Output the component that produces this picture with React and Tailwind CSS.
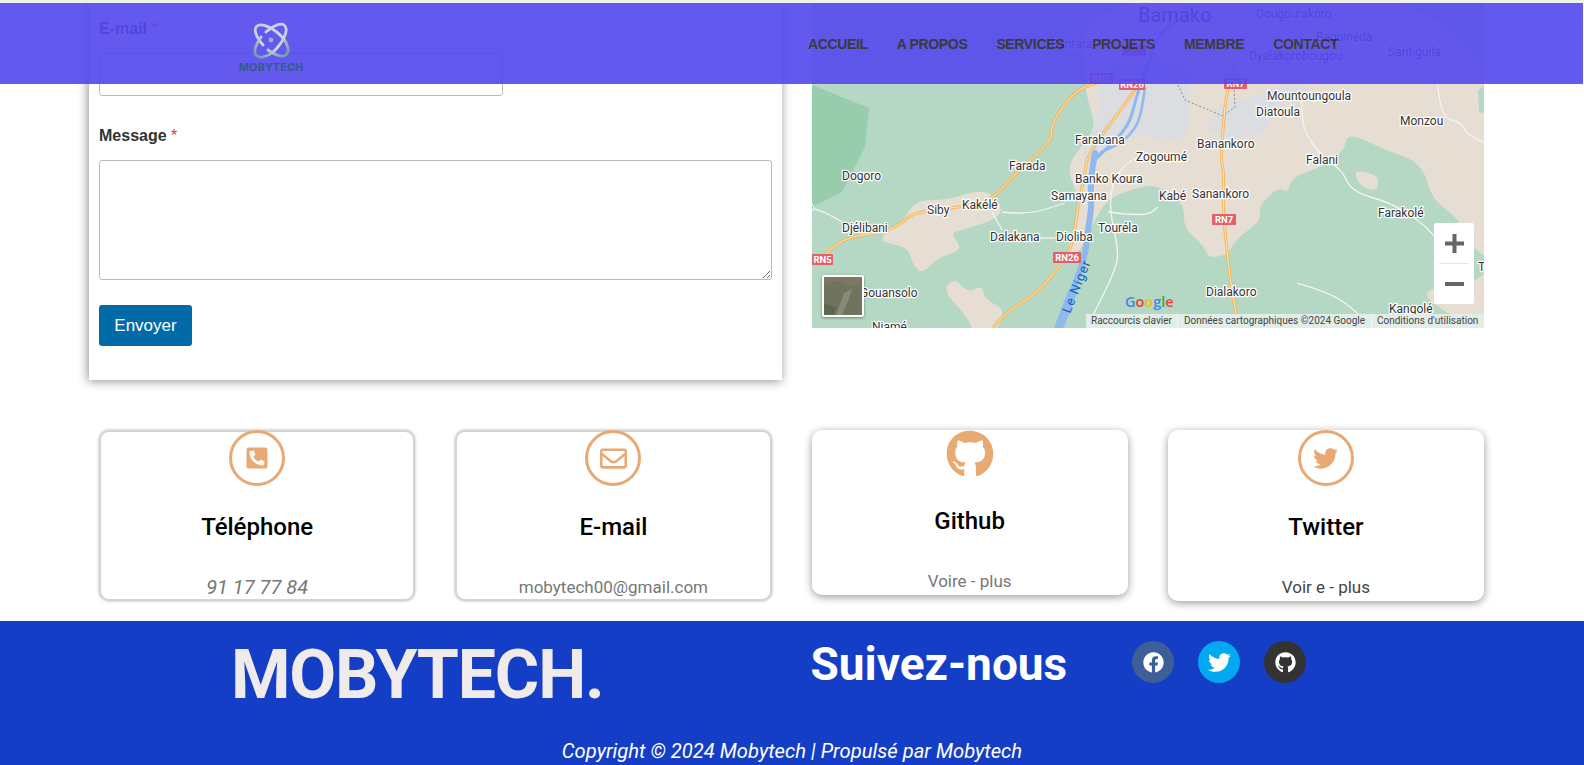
import React from "react";
import { FaGithub, FaFacebook, FaTwitter, FaRegEnvelope, FaPhoneSquareAlt } from "react-icons/fa";

const labels = [
  ["Dougourakoro", 1256, 14], ["Baguinéda", 1316, 37], ["Dyalakorobougou", 1249, 56], ["Santiguila", 1388, 52], ["Sanfara", 1051, 44],
  ["Dogoro", 842, 176], ["o", 806, 207], ["Siby", 927, 210], ["Kakélé", 962, 205], ["Farada", 1009, 166], ["Farabana", 1075, 140],
  ["Banko Koura", 1075, 179], ["Samayana", 1051, 196], ["Djélibani", 842, 228], ["Dalakana", 990, 237], ["Dioliba", 1056, 237],
  ["Touréla", 1098, 228], ["Gouansolo", 860, 293], ["Niamé", 872, 327], ["Zogoumé", 1136, 157], ["Mountoungoula", 1267, 96],
  ["Diatoula", 1256, 112], ["Monzou", 1400, 121], ["Banankoro", 1197, 144], ["Falani", 1306, 160], ["Kabé", 1159, 196],
  ["Sanankoro", 1192, 194], ["Farakolé", 1378, 213], ["Dialakoro", 1206, 292], ["Kangolé", 1389, 309], ["T", 1478, 267],
];
const shields = [
  ["RN5", 1090, 73, 23], ["RN26", 1119, 79, 26], ["RN7", 1224, 78, 23], ["", 1122, 45, 24], ["RN7", 1212, 214, 24], ["RN26", 1053, 252, 28], ["RN5", 812, 254, 21],
];

// Rounded outline through a list of points: each vertex becomes a quadratic corner.
const smooth = (pts, closed) => {
  const mid = (a, b) => [(a[0] + b[0]) / 2, (a[1] + b[1]) / 2];
  if (closed) {
    const start = mid(pts[pts.length - 1], pts[0]);
    let d = `M${start[0]} ${start[1]}`;
    pts.forEach((p, i) => {
      const m = mid(p, pts[(i + 1) % pts.length]);
      d += ` Q${p[0]} ${p[1]} ${m[0]} ${m[1]}`;
    });
    return d + " Z";
  }
  let d = `M${pts[0][0]} ${pts[0][1]}`;
  for (let i = 1; i < pts.length - 1; i++) {
    const m = mid(pts[i], pts[i + 1]);
    d += ` Q${pts[i][0]} ${pts[i][1]} ${m[0]} ${m[1]}`;
  }
  const l = pts[pts.length - 1];
  return d + ` L${l[0]} ${l[1]}`;
};

const tan = [
  [[1083, -10], [1494, -10], [1494, 257], [1475, 253], [1458, 217], [1432, 200], [1422, 163], [1385, 150], [1347, 132], [1345, 150], [1322, 167], [1292, 177], [1288, 193], [1278, 187], [1258, 207], [1262, 220], [1235, 240], [1228, 255], [1208, 258], [1205, 247], [1183, 227], [1185, 207], [1167, 190], [1150, 185], [1130, 190], [1110, 198], [1098, 213], [1078, 257], [1065, 250], [1082, 210], [1075, 190], [1068, 170], [1075, 153], [1098, 130], [1083, 87]],
  [[1353, 172], [1365, 171], [1379, 177], [1377, 191], [1362, 188]],
  [[1494, 266], [1470, 285], [1430, 288], [1425, 297], [1445, 312], [1494, 338]],
  [[915, 200], [948, 200], [985, 188], [1004, 207], [995, 220], [962, 230], [950, 233], [964, 250], [938, 257], [922, 275], [912, 263], [908, 247], [880, 242], [885, 233], [902, 223]],
  [[942, 290], [955, 278], [968, 293], [982, 285], [985, 300], [1007, 310], [992, 338], [975, 338], [968, 317]],
];
const grey = [
  [[1100, 60], [1190, 60], [1188, 100], [1190, 135], [1165, 145], [1150, 135], [1115, 140], [1100, 155], [1078, 162], [1090, 135], [1100, 110]],
  [[1205, 125], [1220, 105], [1240, 100], [1262, 95], [1275, 85], [1312, 84], [1300, 100], [1272, 105], [1270, 130], [1240, 140], [1215, 135]],
];
const roads = [
  [[812, 265], [832, 248], [848, 237], [885, 232], [902, 223], [915, 212], [962, 207], [992, 200], [1012, 177], [1045, 147], [1052, 137], [1052, 122], [1075, 90], [1098, 83], [1122, 72]],
  [[1146, 72], [1138, 87], [1088, 153], [1085, 173], [1078, 207], [1072, 247], [1062, 263], [1038, 293], [1005, 313], [993, 328]],
  [[1236, 60], [1227, 88], [1223, 127], [1221, 160], [1224, 173], [1223, 213], [1228, 260], [1232, 293], [1237, 317], [1238, 328]],
];
const whiteRoads = [
  [[1002, 212], [1028, 215], [1065, 203]], [[992, 212], [1002, 230]], [[1038, 238], [1055, 238]],
  [[1138, 157], [1118, 167], [1108, 203], [1118, 247], [1117, 267], [1092, 317], [1088, 328]],
  [[1108, 212], [1145, 217], [1158, 207]], [[812, 208], [825, 212], [842, 222]],
  [[1302, 100], [1302, 117], [1305, 133], [1322, 157], [1342, 170], [1352, 192], [1392, 203], [1422, 223], [1435, 237]],
  [[1438, 85], [1440, 117], [1462, 123], [1465, 132], [1484, 143]], [[1297, 283], [1332, 293], [1358, 313], [1370, 328]],
];

function MapArt() {
  return (
    <svg viewBox="812 0 672 328" width="672" height="328" className="block">
      <rect x="812" y="0" width="672" height="328" fill="#B4D8C3" />
      <path d="M812 85 L869 108 L865 147 L842 192 L812 207 Z" fill="#97CDAC" />
      {tan.map((p, i) => <path key={i} d={smooth(p, true)} fill="#E6DED2" />)}
      <path d="M1478 90 L1484 86 L1484 113 L1479 112 Z" fill="#B4D8C3" />
      {grey.map((p, i) => <path key={i} d={smooth(p, true)} fill="#DCDDE0" />)}
      {whiteRoads.map((p, i) => <path key={i} d={smooth(p)} fill="none" stroke="#F2F5F2" strokeWidth="1.3" />)}
      <path d="M1178 85 L1185 100 L1223 116 L1235 107 L1234 87" fill="none" stroke="#8A8A8A" strokeWidth="1" strokeDasharray="2 2" />
      {roads.map((p, i) => <path key={i} d={smooth(p)} fill="none" stroke="#F4B65E" strokeWidth="3" />)}
      {roads.map((p, i) => <path key={i} d={smooth(p)} fill="none" stroke="#FCE8B8" strokeWidth="1" />)}
      <g fill="none" stroke="#8FB9EE" strokeLinejoin="round" strokeLinecap="round">
        <path d={smooth([[1095, 153], [1090, 180], [1092, 203], [1088, 230], [1085, 257], [1072, 293], [1058, 328]])} strokeWidth="6" />
        <path d="M1058 330 L1072 293" strokeWidth="9" />
        <path d={smooth([[1095, 160], [1105, 150], [1128, 127], [1135, 103], [1140, 85], [1150, 60], [1160, 30], [1190, 15]])} strokeWidth="3" />
        <path d={smooth([[1092, 175], [1093, 155], [1118, 145], [1130, 135], [1140, 120], [1145, 88]])} strokeWidth="2.5" />
      </g>
      <g fontFamily="Roboto, sans-serif" fontSize="12" fill="#333" stroke="#fff" strokeWidth="2.5" strokeLinejoin="round" paintOrder="stroke">
        {labels.map(([t, x, y]) => <text key={t} x={x} y={y + 4}>{t}</text>)}
        <text x="1138" y="22" fontSize="20" stroke="none">Bamako</text>
      </g>
      {shields.map(([t, x, y, w]) => (
        <g key={t + x}>
          <rect x={x} y={y} width={w} height="11" rx="1" fill="#E2606B" />
          {t ? <text x={x + w / 2} y={y + 9} textAnchor="middle" fontFamily="Roboto, sans-serif" fontSize="9.5" fontWeight="700" fill="#fff">{t}</text> : null}
        </g>
      ))}
      <text x="0" y="0" transform="translate(1070 314) rotate(-68)" fontFamily="Roboto, sans-serif" fontSize="13" letterSpacing="1" fill="#0F5FC8">Le Niger</text>
      <text x="1125" y="307" fontFamily="'Open Sans', sans-serif" fontSize="14.5" fontWeight="600">
        <tspan fill="#4285F4">G</tspan><tspan fill="#EA4335">o</tspan><tspan fill="#FBBC05">o</tspan><tspan fill="#4285F4">g</tspan><tspan fill="#34A853">l</tspan><tspan fill="#EA4335">e</tspan>
      </text>
    </svg>
  );
}

function Logo() {
  const band = "M10 23 C3 15 0 7 4 4 C9 0 22 7 30 16 C35 22 37 30 33 33 C30 36 22 33 15 28";
  return (
    <div className="flex flex-col items-center w-[64px]">
      <svg width="36" height="37" viewBox="0 0 36 37" className="block overflow-visible">
        <defs>
          <linearGradient id="lg" gradientUnits="userSpaceOnUse" x1="0" y1="0" x2="36" y2="36">
            <stop offset="0" stopColor="#BFCBDD" />
            <stop offset="0.55" stopColor="#C9D2E2" />
            <stop offset="1" stopColor="#4B8798" />
          </linearGradient>
        </defs>
        <path d={band} fill="none" stroke="url(#lg)" strokeWidth="2.8" strokeLinecap="round" />
        <path d={band} fill="none" stroke="url(#lg)" strokeWidth="2.8" strokeLinecap="round" transform="rotate(90 18 18)" />
        <circle cx="18" cy="18" r="2.4" fill="#8FA6B8" />
      </svg>
      <span className="mt-[3px] text-[11px] leading-[11px] font-bold text-[#174B7F] font-['Inter',sans-serif] whitespace-nowrap">MOBYTECH</span>
    </div>
  );
}

function InfoCard({ icon, title, value, valueCls, cardCls, titleMt }) {
  return (
    <div className={`flex flex-col items-center bg-white rounded-[10px] ${cardCls}`}>
      {icon}
      <h3 className={`${titleMt} text-[24px] leading-[32px] font-medium text-black`}>{title}</h3>
      <p className={`mt-[31px] leading-[27px] whitespace-nowrap ${valueCls}`}>{value}</p>
    </div>
  );
}

const ring = "w-[56px] h-[56px] rounded-full border-[3px] border-[#E9A973] flex items-center justify-center text-[#E9A973] shrink-0";
const softCard = "h-[171px] border-2 border-[#d4d4d4] shadow-[0_0_3px_rgba(0,0,0,0.3)]";
const liftCard = "shadow-[0_2px_8px_rgba(0,0,0,0.4)]";

export default function App() {
  return (
    <div className="relative w-[1584px] h-[765px] overflow-hidden bg-white font-['Roboto',sans-serif]">
      <div className="absolute top-0 left-0 right-0 h-[3px] bg-[#EEF2E8] z-20" />
      <header className="absolute top-[3px] left-0 w-[1583px] h-[81px] z-10 opacity-90 bg-[#5448EE] flex items-start pl-[239px]">
        <div className="pt-[19px]"><Logo /></div>
        <nav className="ml-[505px] pt-[33px] flex gap-[29px] text-[14px] tracking-[-0.35px] leading-[16px] font-bold text-[#2b2b2b] font-['Liberation_Sans',sans-serif] whitespace-nowrap">
          <span>ACCUEIL</span><span>A PROPOS</span><span>SERVICES</span><span className="-ml-[1px]">PROJETS</span><span>MEMBRE</span><span>CONTACT</span>
        </nav>
      </header>

      <main className="h-[621px] overflow-hidden">
        <section className="flex items-start pl-[89px] gap-[30px] h-[430px]">
          <form className="w-[693px] h-[380px] bg-white shadow-[-1px_1px_10px_rgba(0,0,0,0.45)] pl-[10px] pr-[10px] pt-[20px] font-['Liberation_Sans',sans-serif]">
            <label className="block text-[16px] leading-[18px] font-bold text-[#333]">E-mail <span className="text-[#e2401c] font-normal">*</span></label>
            <input className="block mt-[15px] w-[404px] h-[43px] border border-[#bbb] rounded-[3px] bg-white" />
            <label className="block mt-[31px] text-[16px] leading-[18px] font-bold text-[#333]">Message <span className="text-[#e2401c] font-normal">*</span></label>
            <textarea className="block mt-[15px] w-[673px] h-[120px] border border-[#bbb] rounded-[3px] bg-white" />
            <button type="button" className="block mt-[25px] w-[93px] h-[41px] rounded-[3px] bg-[#006BA8] text-white text-[17px]">Envoyer</button>
          </form>
          <div className="relative w-[672px] h-[328px] overflow-hidden">
            <MapArt />
            <div className="absolute left-[10px] top-[275px] w-[42px] h-[42px] border-2 border-white rounded-[2px] shadow-[0_1px_3px_rgba(0,0,0,0.4)] bg-[#6D7361] overflow-hidden">
              <svg viewBox="0 0 38 38" width="38" height="38" className="block">
                <rect width="38" height="38" fill="#6F745F" />
                <path d="M0 8 L14 4 L30 10 L38 4 L38 0 L0 0 Z" fill="#7C7862" />
                <path d="M12 38 L20 16 L28 12 L24 24 L18 38 Z" fill="#8A8A76" />
                <path d="M0 26 L12 30 L10 38 L0 38 Z" fill="#5E6650" />
              </svg>
            </div>
            <div className="absolute right-[10px] top-[223px] w-[40px] h-[81px] bg-white rounded-[2px] flex flex-col items-center">
              <div className="h-[40px] flex items-center justify-center">
                <svg width="19" height="19" viewBox="0 0 19 19"><path d="M7.5 0h4v7.5H19v4h-7.5V19h-4v-7.5H0v-4h7.5z" fill="#666" /></svg>
              </div>
              <div className="w-[30px] h-px bg-[#e6e6e6]" />
              <div className="h-[40px] flex items-center justify-center">
                <svg width="19" height="4" viewBox="0 0 19 4"><rect width="19" height="4" fill="#666" /></svg>
              </div>
            </div>
            <div className="absolute right-0 bottom-0 h-[14px] w-[398px] bg-[#E1EDE6] flex items-center text-[10px] leading-[14px] text-[#444] whitespace-nowrap">
              <span className="w-[92px] pl-[5px] border-r border-[#f5f5f5]">Raccourcis clavier</span>
              <span className="w-[194px] pl-[6px] border-r border-[#f5f5f5]">Données cartographiques ©2024 Google</span>
              <span className="pl-[5px]">Conditions d'utilisation</span>
            </div>
          </div>
        </section>

        <section className="grid grid-cols-4 gap-[40px] items-start pl-[99px] w-[1484px]">
          <InfoCard
            cardCls={softCard}
            titleMt="mt-[25px]"
            icon={<div className={ring + " -mt-[2px]"}><FaPhoneSquareAlt size={24} /></div>}
            title="Téléphone"
            value="91 17 77 84"
            valueCls="italic text-[#777] text-[20px]"
          />
          <InfoCard
            cardCls={softCard}
            titleMt="mt-[25px]"
            icon={<div className={ring + " -mt-[2px]"}><FaRegEnvelope size={27} /></div>}
            title="E-mail"
            value="mobytech00@gmail.com"
            valueCls="text-[#777] text-[17px]"
          />
          <InfoCard
            cardCls={liftCard + " h-[165px]"}
            titleMt="mt-[27px]"
            icon={<FaGithub size={48} className="text-[#E9A973] shrink-0" />}
            title="Github"
            value="Voire - plus"
            valueCls="text-[#777] text-[17px]"
          />
          <InfoCard
            cardCls={liftCard + " h-[171px]"}
            titleMt="mt-[25px]"
            icon={<div className={ring}><FaTwitter size={25} /></div>}
            title="Twitter"
            value="Voir e - plus"
            valueCls="text-[#444] text-[17px]"
          />
        </section>
      </main>

      <footer className="h-[144px] bg-[#153EC6] relative">
        <div className="flex items-start pl-[231px] pt-[14px]">
          <h2 className="text-[68px] tracking-[-1.2px] leading-[80px] font-bold text-[#EFEBEB] whitespace-nowrap">MOBYTECH.</h2>
          <h2 className="ml-[207px] mt-[2px] text-[46px] leading-[54px] font-bold text-white whitespace-nowrap">Suivez-nous</h2>
          <div className="ml-[65px] mt-[6px] flex gap-[24px]">
            <a className="w-[42px] h-[42px] rounded-full bg-[#3B5F96] flex items-center justify-center text-white"><FaFacebook size={21} /></a>
            <a className="w-[42px] h-[42px] rounded-full bg-[#03A9F0] flex items-center justify-center text-white"><FaTwitter size={23} /></a>
            <a className="w-[42px] h-[42px] rounded-full bg-[#333] flex items-center justify-center text-white"><FaGithub size={21} /></a>
          </div>
        </div>
        <p className="mt-[24px] text-center italic text-[20.2px] leading-[24px] text-white">Copyright © 2024 Mobytech | Propulsé par Mobytech</p>
      </footer>
    </div>
  );
}
